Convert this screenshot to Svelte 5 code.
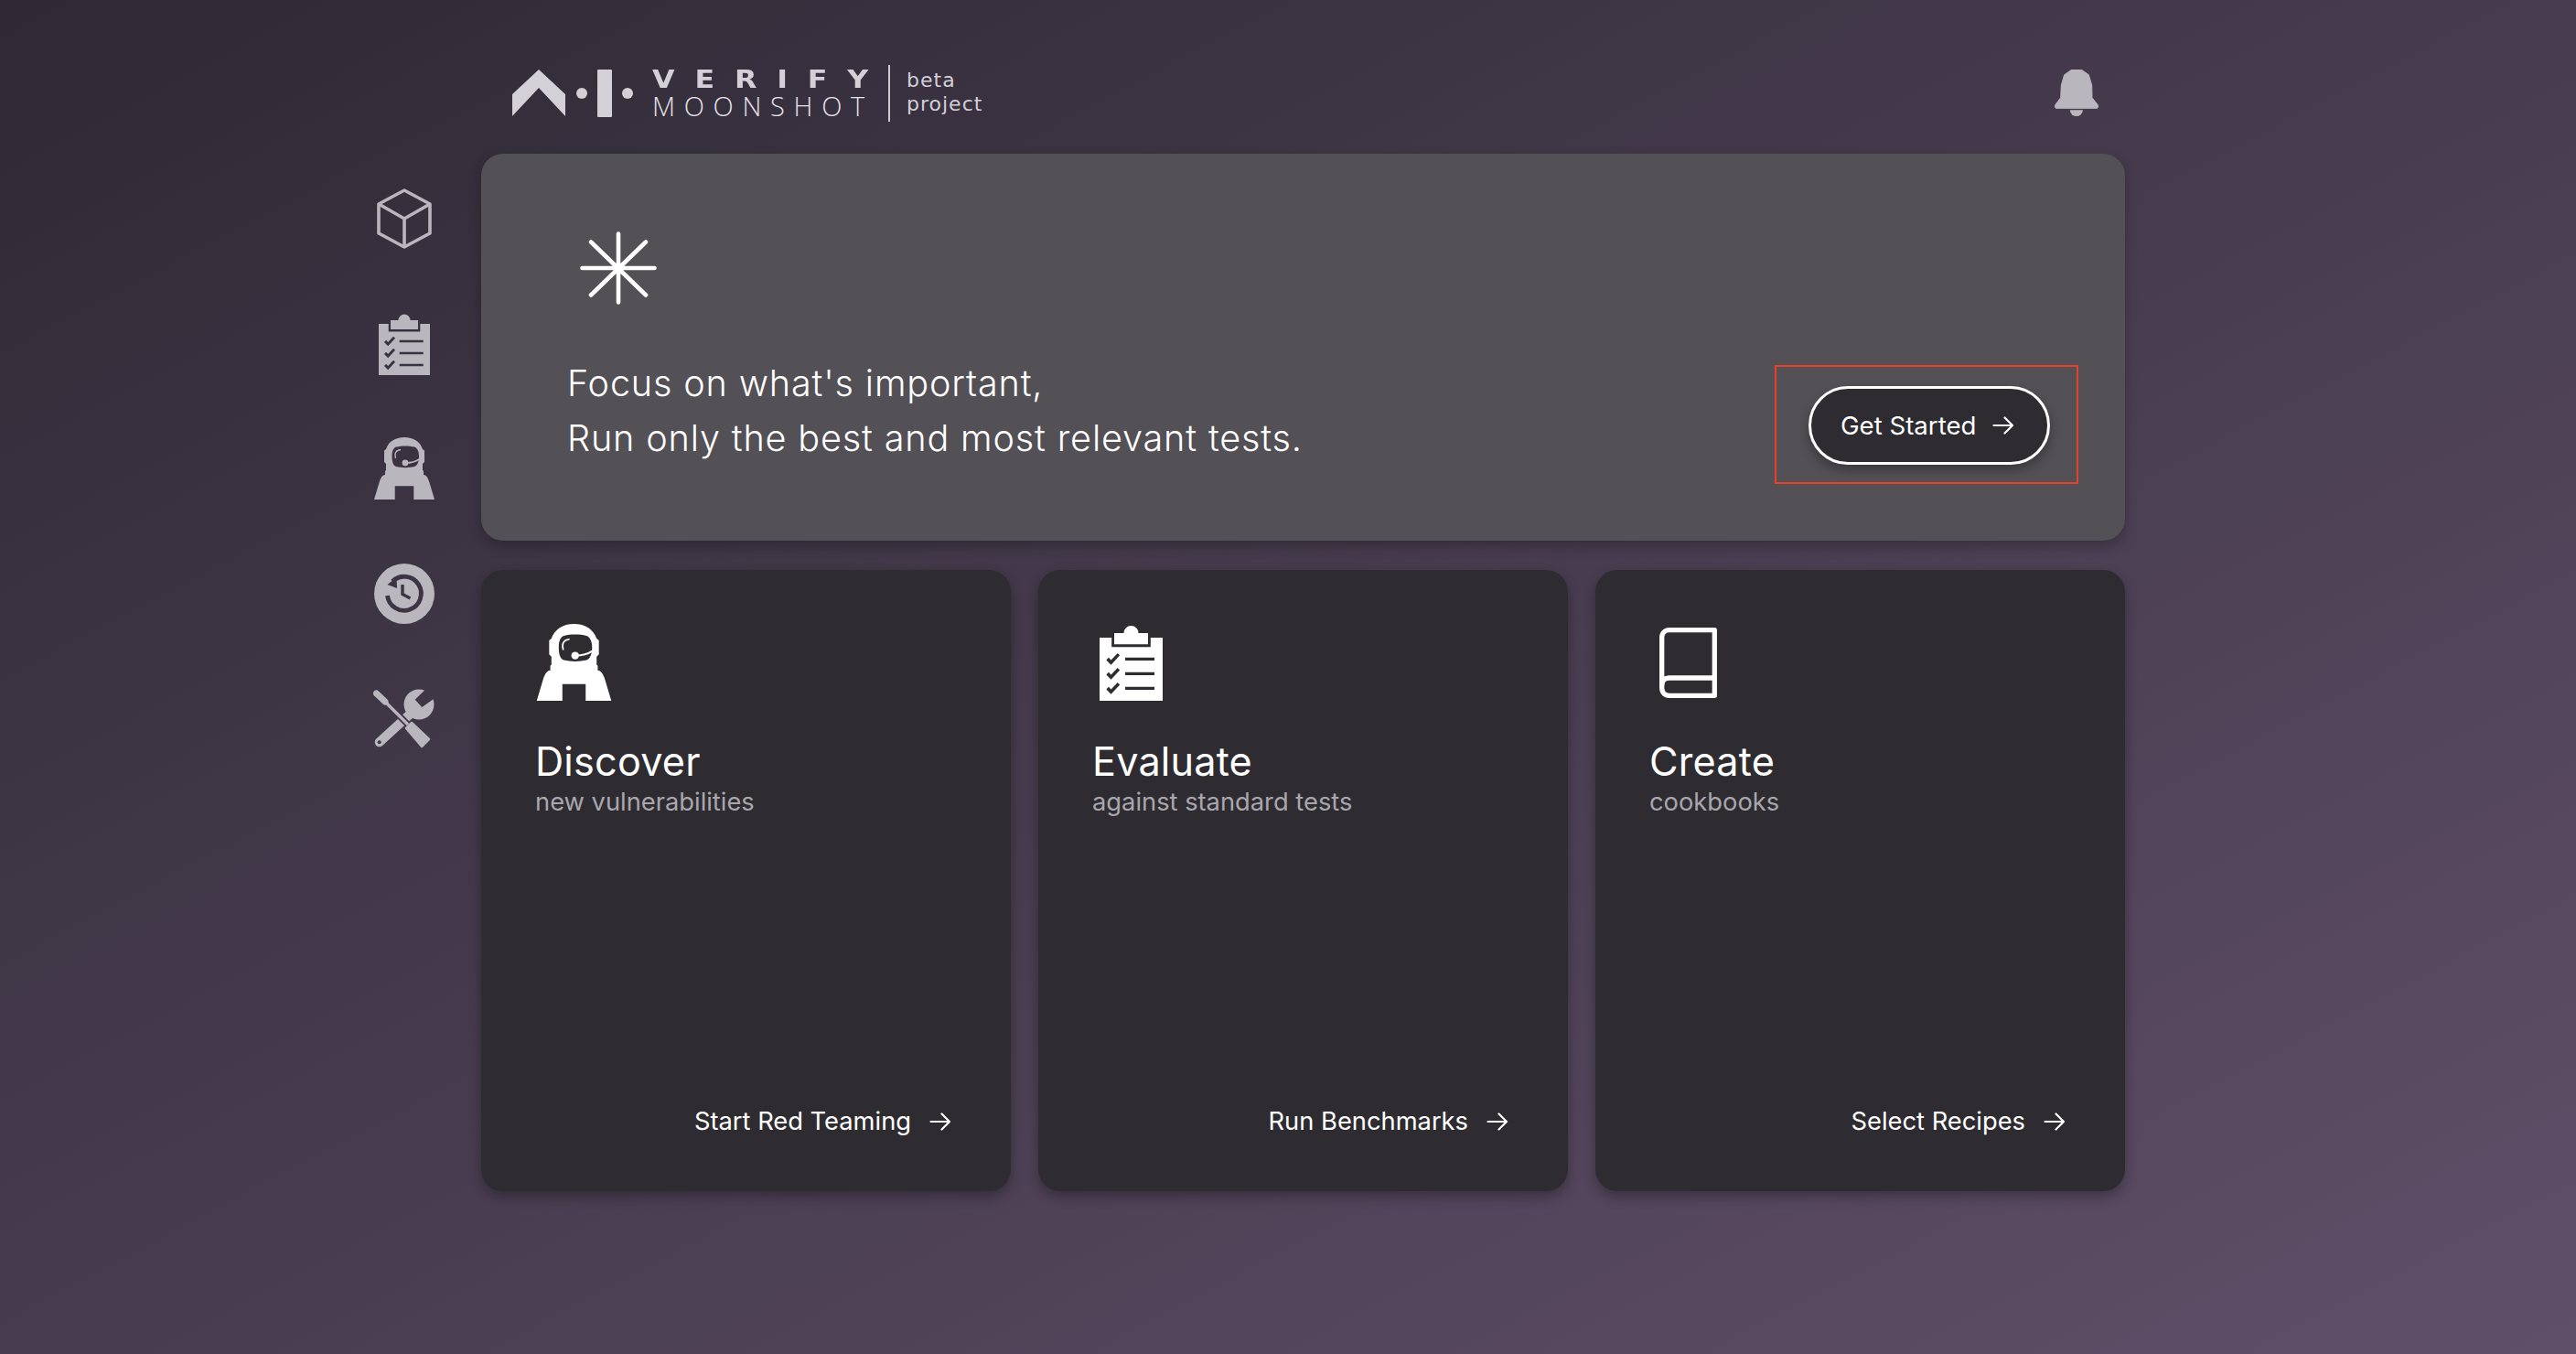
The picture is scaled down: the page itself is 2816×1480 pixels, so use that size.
<script lang="ts">
    const sideIcons = ["cube", "clipboard", "astronaut", "history", "tools"];

    const cards = [
        { icon: "astronaut", title: "Discover", sub: "new vulnerabilities", action: "Start Red Teaming" },
        { icon: "clipboard", title: "Evaluate", sub: "against standard tests", action: "Run Benchmarks" },
        { icon: "book", title: "Create", sub: "cookbooks", action: "Select Recipes" },
    ];
</script>

{#snippet arrow()}
    <svg class="arrow" viewBox="0 0 24 20" fill="none" stroke="currentColor" stroke-width="2.2" stroke-linecap="round" stroke-linejoin="round">
        <path d="M1.5 10H22M13.5 1.5 22 10l-8.5 8.5" />
    </svg>
{/snippet}

{#snippet icon(name: string)}
    {#if name === "cube"}
        <svg class="i-cube" viewBox="0 0 60 66" fill="none" stroke="currentColor" stroke-width="3.6" stroke-linejoin="round">
            <path d="M30 2 58 17V49L30 64 2 49V17Z" />
            <path d="M2 17 30 33 58 17M30 33V64" />
        </svg>
    {:else if name === "clipboard"}
        <svg class="i-clipboard" viewBox="0 0 56 68" fill="currentColor">
            <path d="M13 18V8H21.5A6.5 6.5 0 0 1 34.5 8H43V18Z" />
            <path fill-rule="evenodd" d="M0 12H10.7V20.5H45.3V12H56V68H0ZM22.7 29.7V32.3H48.7V29.7ZM22.7 42.7V45.3H48.7V42.7ZM22.7 55.7V58.3H48.7V55.7ZM6 32 8 29.8 10.2 32 16 25.8 18 27.8 10.2 36.3ZM6 45 8 42.8 10.2 45 16 38.8 18 40.8 10.2 49.3ZM6 58 8 55.8 10.2 58 16 51.8 18 53.8 10.2 62.3Z" />
        </svg>
    {:else if name === "astronaut"}
        <svg class="i-astronaut" viewBox="0 0 66 68" fill="currentColor">
            <path fill-rule="evenodd" d="M33 0C23 0 15.5 5 13 13L11 14.5V27L13 29V36L12 37V41C9 41 7.5 44 6 48L0 68H22.7V53.3H43.3V68H66L60 48C58.5 44 57 41 54 41V37L53 36V29L55 27V14.5L53 13C50.5 5 43 0 33 0ZM24 10.5C30 9 38 9 44 10.5 47 11.5 49 15 49 21 49 27 47 31 44 32 38 33.5 30 33.5 24 32 21 31 19.5 27 19.5 21 19.5 15 21 11.5 24 10.5Z" />
            <path d="M23.5 23C22 18 23 14.5 29 13.5" fill="none" stroke="currentColor" stroke-width="1.4" />
            <circle cx="34" cy="28" r="3.4" />
            <path d="M34 28C40 28 45 27 49 24" fill="none" stroke="currentColor" stroke-width="1.6" />
        </svg>
    {:else if name === "history"}
        <svg class="i-history" viewBox="0 0 66 66">
            <mask id="history-cut">
                <rect width="66" height="66" fill="#fff" />
                <path d="M20 19.5A18.5 18.5 0 1 1 14.5 35" fill="none" stroke="#000" stroke-width="4.8" />
                <path d="M14.5 23 24.5 15 25 27Z" fill="#000" />
                <path d="M31 23V33.5L39.5 38" fill="none" stroke="#000" stroke-width="3.4" />
            </mask>
            <circle cx="33" cy="33" r="33" fill="currentColor" mask="url(#history-cut)" />
        </svg>
    {:else if name === "tools"}
        <svg class="i-tools" viewBox="0 0 67 65">
            <mask id="tools-cut">
                <rect width="67" height="65" fill="#fff" />
                <path d="M56.7 1 45.7 11.7 53.3 20 67.5 10V0Z" fill="#000" />
                <circle cx="6.7" cy="58.3" r="2" fill="#000" />
                <path d="M28 29 40 41" stroke="#000" stroke-width="7" />
            </mask>
            <g mask="url(#tools-cut)" fill="currentColor" stroke="currentColor">
                <circle cx="50" cy="17" r="16.5" stroke="none" />
                <path d="M42 26 6.7 58.3" stroke-width="10" stroke-linecap="round" fill="none" />
            </g>
            <g fill="currentColor" stroke="currentColor">
                <path d="M3.5 5 13 14" stroke-width="7" stroke-linecap="round" fill="none" />
                <path d="M10 11 38 39" stroke-width="3.4" fill="none" />
                <path d="M36 43 42 37 61 55 53 63Z" stroke-width="2.5" stroke-linejoin="round" />
            </g>
        </svg>
    {:else if name === "book"}
        <svg class="i-book" viewBox="0 0 63 77" fill="none" stroke="currentColor" stroke-width="5.3" stroke-linejoin="round">
            <path d="M60.3 2.7H11C6 2.7 2.7 6 2.7 11V66C2.7 71 6 74.3 11 74.3H60.3Z" />
            <path d="M2.7 63C2.7 58 6 55 11 55H60.3" />
        </svg>
    {/if}
{/snippet}

<div class="page">
    <nav class="side">
        {#each sideIcons as name}
            <div class="side-item">{@render icon(name)}</div>
        {/each}
    </nav>

    <main class="main">
        <header class="top">
            <div class="logo">
                <svg class="mark" viewBox="0 0 132 52" fill="currentColor">
                    <path d="M29 0 58 27V51L29 20 0 51V27Z" />
                    <circle cx="76" cy="26" r="6" />
                    <rect x="93" y="0" width="16" height="52" rx="1" />
                    <circle cx="126" cy="26" r="6" />
                </svg>
                <div class="wordmark">
                    <span class="verify">VERIFY</span>
                    <span class="moonshot">MOONSHOT</span>
                </div>
                <div class="beta">
                    <span>beta</span>
                    <span>project</span>
                </div>
            </div>
            <svg class="bell" viewBox="0 0 48 52" fill="currentColor">
                <path d="M19 0H29L37.3 5.7 40.7 17.3 41 30.7 48 39.7 46.7 42.3H1.3L0 39.7 6.7 30.7 7.3 17.3 10.7 5.7Z" stroke="currentColor" stroke-width="1" stroke-linejoin="round" />
                <path d="M16.7 44.3H31A7.2 7.7 0 0 1 16.7 44.3Z" />
            </svg>
        </header>

        <section class="banner">
            <div>
                <svg class="star" viewBox="0 0 84 80" fill="none" stroke="currentColor" stroke-width="4.6" stroke-linecap="round">
                    <path d="M42 2.5V77.5M2.5 40H81.5M12 11.5 72 69.5M72 11.5 12 69.5" />
                </svg>
                <p class="tagline">Focus on what's important,<br />Run only the best and most relevant tests.</p>
            </div>
            <div class="highlight">
                <button class="start">Get Started {@render arrow()}</button>
            </div>
        </section>

        <section class="cards">
            {#each cards as card}
                <article class="card">
                    <div class="card-icon">{@render icon(card.icon)}</div>
                    <h2>{card.title}</h2>
                    <p>{card.sub}</p>
                    <a class="action" href="#top">{card.action} {@render arrow()}</a>
                </article>
            {/each}
        </section>
    </main>
</div>

<style>
    :global(body) {
        margin: 0;
        background: #2f2a36;
    }

    .page {
        height: 1480px;
        box-sizing: border-box;
        display: flex;
        overflow: hidden;
        padding-left: 408px;
        background: linear-gradient(to bottom right, #2e2934, #604f69);
        font-family: Inter, "Liberation Sans", sans-serif;
        color: #fff;
    }

    .side {
        width: 67px;
        margin-right: 51px;
        padding-top: 171px;
        display: grid;
        grid-auto-rows: 136.5px;
        align-content: start;
        color: #b9b6bd;
    }

    .side-item {
        display: flex;
        align-items: center;
        justify-content: center;
    }

    .side-item .i-cube { width: 60px; height: 66px; }
    .side-item .i-clipboard { width: 56px; height: 68px; }
    .side-item .i-astronaut { width: 66px; height: 68px; }
    .side-item .i-history { width: 66px; height: 66px; }
    .side-item .i-tools { width: 67px; height: 65px; }

    .main {
        width: 1797px;
    }

    .top {
        height: 168px;
        box-sizing: border-box;
        padding: 36px 29px 0 34px;
        display: flex;
        align-items: center;
        justify-content: space-between;
    }

    .logo {
        display: flex;
        align-items: center;
        color: #d3d0d7;
    }

    .mark {
        width: 132px;
        height: 52px;
        margin-right: 21px;
    }

    .wordmark {
        display: flex;
        flex-direction: column;
        font-family: "DejaVu Sans", sans-serif;
        line-height: 1;
        white-space: nowrap;
        width: 238px;
    }

    .verify {
        font-size: 26px;
        font-weight: 700;
        letter-spacing: 17.9px;
        line-height: 28px;
        transform: scaleX(1.22);
        transform-origin: left center;
    }

    .moonshot {
        font-family: "Open Sans", sans-serif;
        font-size: 29px;
        font-weight: 300;
        letter-spacing: 9.7px;
        line-height: 30px;
        color: #e4e2e8;
    }

    .beta {
        margin-left: 20px;
        padding-left: 18px;
        height: 62px;
        border-left: 2px solid #cdcad1;
        display: flex;
        flex-direction: column;
        justify-content: center;
        padding-bottom: 2px;
        box-sizing: border-box;
        font-family: "DejaVu Sans", sans-serif;
        font-size: 22px;
        letter-spacing: 1px;
        line-height: 26px;
    }

    .bell {
        width: 48px;
        height: 52px;
        color: #b9b6bd;
    }

    .banner {
        height: 423px;
        box-sizing: border-box;
        padding: 0 51px 62px 94px;
        display: flex;
        align-items: flex-end;
        justify-content: space-between;
        border-radius: 24px;
        background: #535056;
        box-shadow: 0 6px 14px rgba(0, 0, 0, 0.25);
    }

    .star {
        display: block;
        width: 84px;
        height: 80px;
        margin: 0 0 56px 14px;
    }

    .tagline {
        margin: 0 0 20px;
        font-size: 39.6px;
        font-weight: 300;
        letter-spacing: 0.85px;
        line-height: 60px;
    }

    .highlight {
        box-sizing: border-box;
        width: 332px;
        height: 130px;
        padding: 21px 29px 19px 35px;
        border: 2px solid #e8412a;
    }

    .start {
        width: 264px;
        height: 86px;
        padding: 0 0 0 32px;
        display: flex;
        align-items: center;
        gap: 18px;
        border: 3px solid #fff;
        border-radius: 43px;
        background: #2e2c30;
        color: #fff;
        font: 400 27.6px Inter, sans-serif;
        box-shadow: 0 6px 12px rgba(0, 0, 0, 0.3);
    }

    .arrow {
        width: 24px;
        height: 20px;
    }

    .cards {
        margin-top: 32px;
        display: grid;
        grid-template-columns: repeat(3, 1fr);
        gap: 30px;
    }

    .card {
        height: 679px;
        box-sizing: border-box;
        padding: 59px 65px 0 59px;
        display: flex;
        flex-direction: column;
        border-radius: 24px;
        background: #2e2c31;
        box-shadow: 0 6px 14px rgba(0, 0, 0, 0.3);
    }

    .card-icon {
        width: 84px;
        height: 84px;
        display: flex;
        align-items: center;
        justify-content: center;
    }

    .card-icon .i-astronaut { width: 83px; height: 84px; }
    .card-icon .i-clipboard { width: 69px; height: 84px; }
    .card-icon .i-book { width: 63px; height: 77px; }

    h2 {
        margin: 39px 0 0;
        font-size: 43.2px;
        font-weight: 400;
        letter-spacing: 0.2px;
        line-height: 54px;
    }

    .card p {
        margin: 0;
        color: #a9a7ad;
        font-size: 27.3px;
        line-height: 36px;
    }

    .action {
        margin-top: auto;
        margin-bottom: 58px;
        align-self: flex-end;
        display: flex;
        align-items: center;
        gap: 20px;
        color: #fff;
        font-size: 27.3px;
        font-weight: 400;
        line-height: 36px;
        text-decoration: none;
    }
</style>
